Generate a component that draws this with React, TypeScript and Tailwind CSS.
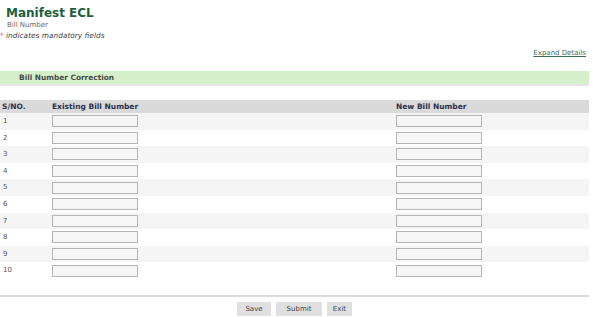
const rows = [1, 2, 3, 4, 5, 6, 7, 8, 9, 10];

function Field() {
  return (
    <input
      type="text"
      className="block h-[12px] w-[86px] border border-[#b5b5b5] bg-[#f6f6f6] outline-none"
    />
  );
}

export default function App() {
  return (
    <div
      className="h-[317px] w-[593px] bg-white pr-[4px] text-[#333]"
      style={{ fontFamily: '"DejaVu Sans", Verdana, sans-serif' }}
    >
      <div className="pl-[6px] pt-[5px]">
        <h1 className="text-[12px] font-bold leading-[16px] text-[#1d5e3d]">Manifest ECL</h1>
        <p className="pl-[1px] text-[7px] leading-[9px] text-[#666]">Bill Number</p>
      </div>
      <p className="text-[7.4px] italic leading-[12px] text-[#444]">
        <span className="not-italic text-[#e0447a]">*</span> indicates mandatory fields
      </p>

      <div className="mt-[6px] flex justify-end pr-[3px]">
        <a href="#" className="text-[7px] leading-[10px] text-[#3b6e55] underline">
          Expand Details
        </a>
      </div>

      <div className="mt-[13px] flex h-[15px] items-center border-b-2 border-[#e6e6e6] bg-[#d4efc9] pl-[19px]">
        <span className="text-[7.4px] font-bold text-[#4a4a4a]">Bill Number Correction</span>
      </div>

      <div className="mt-[14px]">
        <div className="grid h-[13px] grid-cols-[52px_344px_1fr] items-center bg-[#dadada] text-[7.5px] font-bold text-[#2f2f4a]">
          <span className="pl-[2px]">S/NO.</span>
          <span>Existing Bill Number</span>
          <span>New Bill Number</span>
        </div>
        {rows.map((n) => (
          <div
            key={n}
            className="grid h-[16.6px] grid-cols-[52px_344px_1fr] items-center odd:bg-white even:bg-[#f5f5f5]"
          >
            <span className="pl-[3px] text-[7px] text-[#555]">{n}</span>
            <Field />
            <Field />
          </div>
        ))}
      </div>

      <div className="mt-[16px] border-t-2 border-[#dcdcdc]" />

      <div className="mt-[5px] flex justify-center gap-[5px]">
        <button className="h-[14px] w-[34px] bg-[#e0e0e0] text-[7px] text-[#444]">Save</button>
        <button className="h-[14px] w-[46px] bg-[#e0e0e0] text-[7px] text-[#444]">Submit</button>
        <button className="h-[14px] w-[25px] bg-[#e0e0e0] text-[7px] text-[#444]">Exit</button>
      </div>
    </div>
  );
}
